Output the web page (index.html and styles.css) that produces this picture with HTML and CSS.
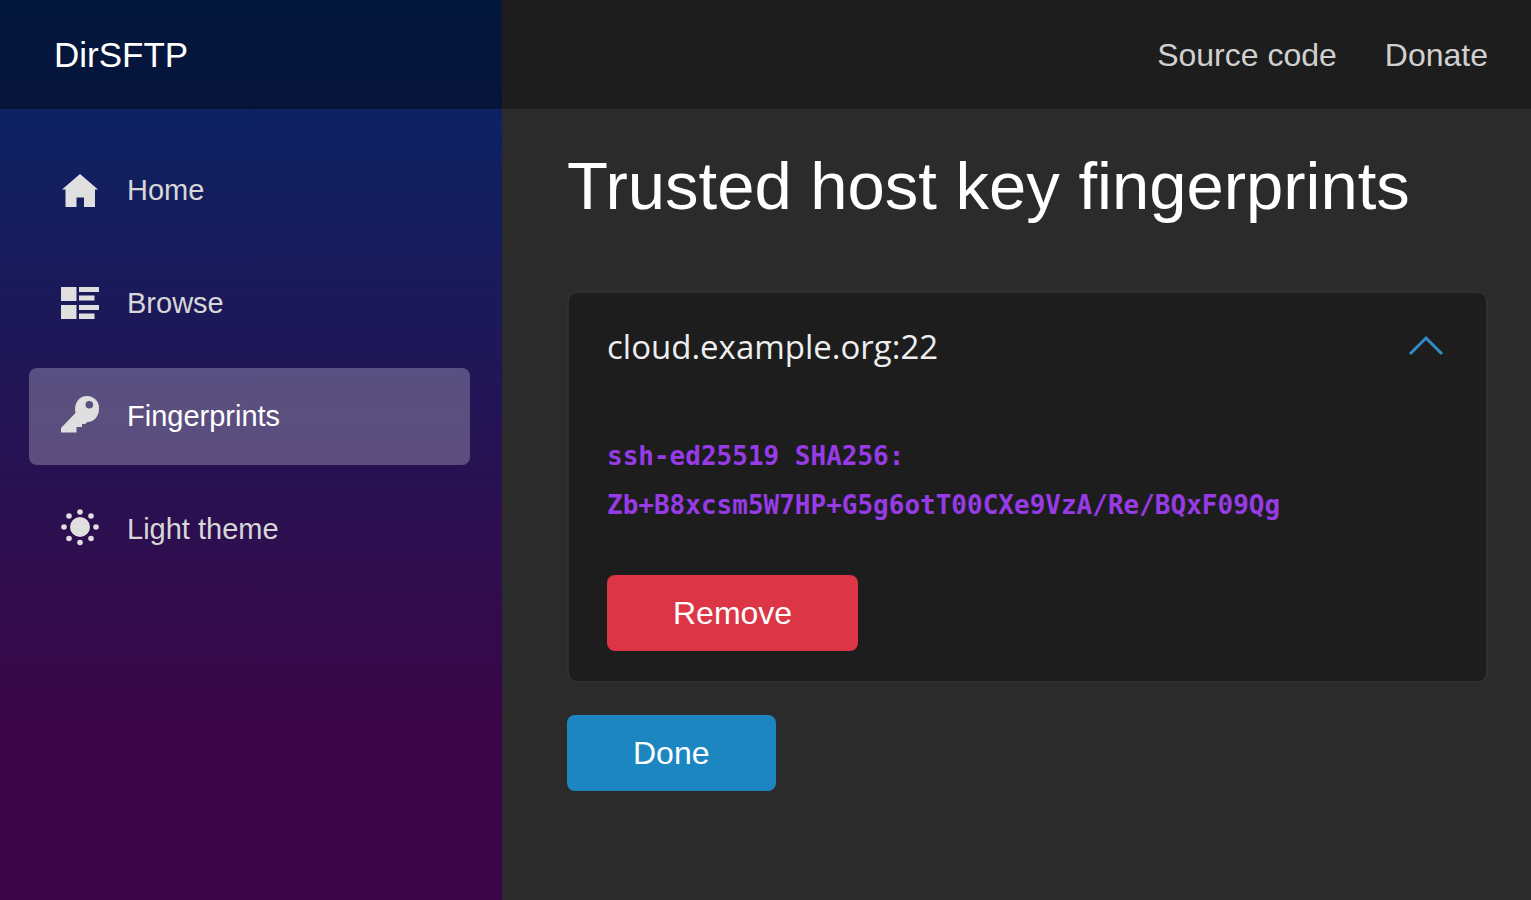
FILE: index.html
```html
<!DOCTYPE html>
<html lang="en">
<head>
<meta charset="utf-8">
<meta name="viewport" content="width=device-width, initial-scale=1">
<title>DirSFTP - Fingerprints</title>
<link rel="stylesheet" href="styles.css">
</head>
<body>
<div class="page">
  <aside class="sidebar">
    <div class="brand-bar"><a class="brand" href="#">DirSFTP</a></div>
    <nav class="nav" aria-label="Main">
      <a class="nav-link" href="#">
        <svg class="nav-icon" viewBox="0 0 38 38" aria-hidden="true"><path d="M19 2 37 17.500H34V35H23V25.500H15.500V35H4.500V17.500H1Z"/></svg>
        Home
      </a>
      <a class="nav-link" href="#">
        <svg class="nav-icon" viewBox="0 0 38 38" aria-hidden="true"><path d="M0 2H15.500V16H0ZM0 20H15.500V34H0ZM18 2H38V7H18ZM18 10.500H33.500V15.500H18ZM18 20H38V25H18ZM18 28.500H33.500V34H18Z"/></svg>
        Browse
      </a>
      <a class="nav-link active" href="#" aria-current="page">
        <svg class="nav-icon" viewBox="0 0 38 38" aria-hidden="true"><path fill-rule="evenodd" d="M26 -2A12 12 0 0 1 38 11C38 19 32 24.500 26 24L24.500 26H21V29H15.500V34.500H0V30L14.500 15C12.500 5.500 18 -2 26 -2ZM28.300 3A3.800 3.800 0 1 0 28.300 10.600A3.800 3.800 0 1 0 28.300 3Z"/></svg>
        Fingerprints
      </a>
      <a class="nav-link" href="#">
        <svg class="nav-icon" viewBox="0 0 38 38" aria-hidden="true"><circle cx="19" cy="16" r="10"/><circle cx="19" cy="1" r="2.800"/><circle cx="19" cy="31.500" r="2.800"/><circle cx="3" cy="16" r="2.800"/><circle cx="35" cy="16" r="2.800"/><circle cx="8" cy="5" r="2.800"/><circle cx="30" cy="5" r="2.800"/><circle cx="8" cy="27.500" r="2.800"/><circle cx="30" cy="27.500" r="2.800"/></svg>
        Light theme
      </a>
    </nav>
  </aside>
  <div class="main">
    <header class="top-row">
      <a class="top-link" href="#">Source code</a>
      <a class="top-link" href="#">Donate</a>
    </header>
    <main class="content">
      <h1 class="title">Trusted host key fingerprints</h1>
      <section class="card">
        <button class="card-toggle" type="button" aria-expanded="true" aria-controls="host-keys">
          cloud.example.org:22
          <svg class="chevron" viewBox="0 0 36 22" aria-hidden="true"><path d="M2 19 18 3 34 19"/></svg>
        </button>
        <div class="card-body" id="host-keys">
          <code class="fingerprint">ssh-ed25519 SHA256:<br>Zb+B8xcsm5W7HP+G5g6otT00CXe9VzA/Re/BQxF09Qg</code>
          <button class="btn btn-danger" type="button">Remove</button>
        </div>
      </section>
      <button class="btn btn-primary" type="button">Done</button>
    </main>
  </div>
</div>
</body>
</html>
```
FILE: styles.css
```css
* { box-sizing: border-box; }

body {
  margin: 0;
  background: #2b2b2b;
  color: #fff;
  font-family: "Liberation Sans", Arial, sans-serif;
  font-size: 32px;
}

a { color: inherit; text-decoration: none; }

.page { display: flex; min-height: 100vh; }

.sidebar {
  flex: 0 0 502px;
  background: linear-gradient(180deg, #052767 0%, #3a0647 80%);
}

.brand-bar {
  display: flex;
  align-items: center;
  height: 109px;
  padding: 0 54px;
  background: rgba(0, 0, 0, 0.4);
}

.brand { font-size: 35px; line-height: 48px; }

.nav {
  display: flex;
  flex-direction: column;
  gap: 16px;
  padding: 33px 32px 32px 29px;
}

.nav-link {
  display: flex;
  align-items: center;
  gap: 28px;
  height: 97px;
  padding: 0 32px;
  border-radius: 8px;
  color: #d7d7d7;
  font-size: 29px;
}

.nav-link.active { background: rgba(255, 255, 255, 0.25); color: #fff; }

.nav-icon { width: 38px; height: 38px; fill: #dfdfdf; overflow: visible; }

.main { flex: 1; min-width: 0; }

.top-row {
  display: flex;
  justify-content: flex-end;
  align-items: center;
  gap: 48px;
  height: 109px;
  padding: 0 43px;
  background: #1d1d1d;
}

.top-link { color: #d0d0d0; font-size: 32px; line-height: 48px; }

.content { padding: 37px 43px 36px 65px; }

.title {
  margin: 0 0 65px;
  font-size: 67px;
  font-weight: 400;
  line-height: 80px;
}

.card {
  margin-bottom: 32px;
  border: 2px solid #303030;
  border-radius: 10px;
  background: #1d1d1d;
}

.card-toggle {
  display: flex;
  justify-content: space-between;
  align-items: center;
  width: 100%;
  height: 106px;
  padding: 0 42px 0 38px;
  border: 0;
  background: none;
  color: #eee;
  font-family: "Open Sans", sans-serif;
  font-size: 33px;
}

.chevron {
  width: 36px;
  height: 22px;
  fill: none;
  stroke: #318cc4;
  stroke-width: 3;
}

.card-body {
  display: flex;
  flex-direction: column;
  align-items: flex-start;
  gap: 45px;
  padding: 33px 38px 30px;
}

.fingerprint {
  max-width: 100%;
  color: #963be6;
  font-family: "DejaVu Sans Mono", monospace;
  font-size: 26px;
  font-weight: 700;
  line-height: 49px;
  overflow-wrap: anywhere;
}

.btn {
  border: 0;
  border-radius: 8px;
  padding: 14px 66px;
  color: #fff;
  font-family: inherit;
  font-size: 32px;
  line-height: 48px;
}

.btn-danger { background: #dc3545; }
.btn-primary { background: #1b86c0; }
```
